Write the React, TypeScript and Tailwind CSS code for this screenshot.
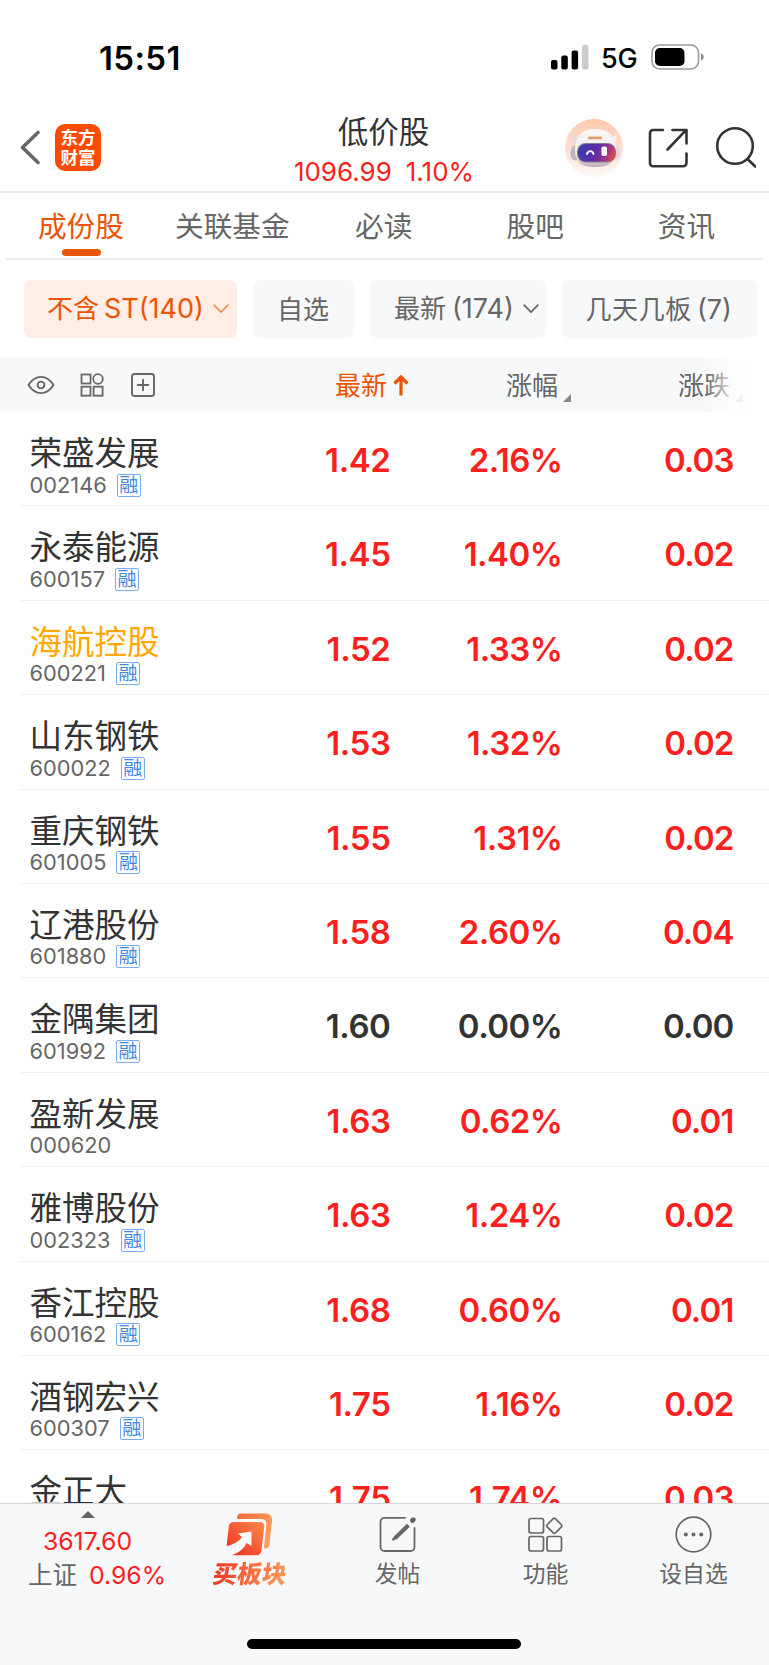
import React from "react";

type Stock = {
  name: string;
  code: string;
  margin: boolean;
  price: string;
  pct: string;
  diff: string;
  tone?: "flat" | "held";
};

const stocks: Stock[] = [
  { name: "荣盛发展", code: "002146", margin: true, price: "1.42", pct: "2.16%", diff: "0.03" },
  { name: "永泰能源", code: "600157", margin: true, price: "1.45", pct: "1.40%", diff: "0.02" },
  { name: "海航控股", code: "600221", margin: true, price: "1.52", pct: "1.33%", diff: "0.02", tone: "held" },
  { name: "山东钢铁", code: "600022", margin: true, price: "1.53", pct: "1.32%", diff: "0.02" },
  { name: "重庆钢铁", code: "601005", margin: true, price: "1.55", pct: "1.31%", diff: "0.02" },
  { name: "辽港股份", code: "601880", margin: true, price: "1.58", pct: "2.60%", diff: "0.04" },
  { name: "金隅集团", code: "601992", margin: true, price: "1.60", pct: "0.00%", diff: "0.00", tone: "flat" },
  { name: "盈新发展", code: "000620", margin: false, price: "1.63", pct: "0.62%", diff: "0.01" },
  { name: "雅博股份", code: "002323", margin: true, price: "1.63", pct: "1.24%", diff: "0.02" },
  { name: "香江控股", code: "600162", margin: true, price: "1.68", pct: "0.60%", diff: "0.01" },
  { name: "酒钢宏兴", code: "600307", margin: true, price: "1.75", pct: "1.16%", diff: "0.02" },
  { name: "金正大", code: "", margin: false, price: "1.75", pct: "1.74%", diff: "0.03" },
];

const tabs = ["成份股", "关联基金", "必读", "股吧", "资讯"];

function StatusBar() {
  return (
    <div className="flex h-[102px] items-start pt-[37px] pl-[99px]">
      <div className="w-[452px] text-[33px] leading-[42px] font-semibold tracking-[0.350px] text-black">15:51</div>
      <svg className="mt-[8px] h-[25px] w-[38px] shrink-0" viewBox="0 0 38 25">
        <rect x="0" y="15" width="6.5" height="9.5" rx="2" />
        <rect x="10.300" y="10.500" width="6.500" height="14" rx="2" />
        <rect x="20.600" y="5.500" width="6.500" height="19" rx="2" />
        <rect x="31" y="0" width="6.500" height="24.500" rx="2" fill="#cbcbcb" />
      </svg>
      <div className="ml-[12px] w-[49px] shrink-0 text-[27px] leading-[43px] font-medium tracking-[-0.300px] text-black">5G</div>
      <svg className="mt-[6px] h-[28px] w-[55px] shrink-0" viewBox="0 0 55 28">
        <rect x="2" y="2" width="46.500" height="24" rx="7.500" fill="none" stroke="#9b9b9b" strokeWidth="1.600" />
        <rect x="5" y="5" width="29.500" height="18" rx="4.800" />
        <path d="M51 10.500c1.800.6 2.700 1.800 2.700 3.500s-.9 2.900-2.700 3.500z" fill="#8c8c8c" />
      </svg>
    </div>
  );
}

function Robot() {
  return (
    <svg className="h-[60px] w-[60px]" viewBox="0 0 60 60">
      <defs>
        <linearGradient id="halo" x1="0" y1="0" x2="0" y2="1">
          <stop offset="0" stopColor="#fec8ae" />
          <stop offset="0.600" stopColor="#fee3d6" />
          <stop offset="1" stopColor="#fffaf8" />
        </linearGradient>
        <linearGradient id="shell" x1="0" y1="0" x2="0" y2="1">
          <stop offset="0" stopColor="#fbf8f6" />
          <stop offset="0.700" stopColor="#eee9e9" />
          <stop offset="1" stopColor="#b9b0b4" />
        </linearGradient>
        <linearGradient id="visor" x1="0" y1="0.300" x2="1" y2="0.500">
          <stop offset="0" stopColor="#3b3fae" />
          <stop offset="0.450" stopColor="#5b2ca6" />
          <stop offset="0.750" stopColor="#96308f" />
          <stop offset="1" stopColor="#dd4a4c" />
        </linearGradient>
      </defs>
      <circle cx="30" cy="30" r="29" fill="url(#halo)" />
      <path d="M7 14c1 5 4 6 9 4l-3 11c-4-2-7-9-6-15z" fill="#e6dad7" />
      <path d="M52 13c0 5-3 6-8 5l4 9c4-2 6-8 4-14z" fill="#f6efec" />
      <ellipse cx="11" cy="35" rx="4.500" ry="7.500" fill="#bdb6bc" />
      <ellipse cx="52" cy="34" rx="4" ry="7.500" fill="#e2d9dc" />
      <path d="M11 31C11 17 19 11 31 11s21 6 21 20c0 13-6 18-21 18S11 44 11 31z" fill="url(#shell)" />
      <rect x="13" y="25" width="39" height="19.500" rx="8.500" fill="#8a7c8e" />
      <rect x="14" y="26" width="37.500" height="17.500" rx="8" fill="url(#visor)" />
      <rect x="24" y="18.500" width="14" height="2.800" rx="1" fill="#e3a070" />
      <path d="M23 36c1-3.800 5.500-3.800 6.500 0" fill="none" stroke="#fff" strokeWidth="1.900" strokeLinecap="round" />
      <rect x="37.500" y="28.500" width="5.500" height="9.500" rx="1.800" fill="#fff" />
    </svg>
  );
}

function NavBar() {
  return (
    <div className="flex h-[91px] border-b-2 border-[#ececec]">
      <svg className="mt-[27px] ml-[19px] h-[38px] w-[24px]" viewBox="0 0 24 38" fill="none" stroke="#666" strokeWidth="3.600" strokeLinecap="round" strokeLinejoin="round">
        <path d="M19 3.500 3.500 18.500 19 33.500" />
      </svg>
      <div className="mt-[22px] ml-[12px] flex h-[47px] w-[46px] flex-col items-center rounded-[10px] bg-[#ff4a00] pt-[4px] text-[17.500px] leading-[19.500px] font-bold text-white">
        <span>东方</span>
        <span>财富</span>
      </div>
      <div className="ml-[178px] flex w-[210px] flex-col items-center">
        <div className="mt-[10px] mr-[1px] h-[40px] text-[30.500px] leading-[40px] text-[#333]">低价股</div>
        <div className="mt-[2px] flex h-[36px] gap-[14px] text-[26px] leading-[36px] text-[#fb1f20]">
          <span>1096.99</span>
          <span>1.10%</span>
        </div>
      </div>
      <div className="mt-[16px] ml-[75px]">
        <Robot />
      </div>
      <svg className="mt-[25px] ml-[23px] h-[42px] w-[42px]" viewBox="0 0 42 42" fill="none" stroke="#333" strokeWidth="2.600" strokeLinecap="round" strokeLinejoin="round">
        <path d="M16 3H6.300A3.200 3.200 0 0 0 3 6v30A3.200 3.200 0 0 0 6.300 39.300h30a3.200 3.200 0 0 0 3.200-3.200V26.500" />
        <path d="M25.500 3H39.500v13.500M39 3.200 20.500 22.500" />
      </svg>
      <svg className="mt-[24px] ml-[25px] h-[42px] w-[42px]" viewBox="0 0 42 42" fill="none" stroke="#333" strokeWidth="2.600" strokeLinecap="round">
        <circle cx="21" cy="20" r="17.800" />
        <path d="m33.500 33 7.800 7.500" />
      </svg>
    </div>
  );
}

function Tabs() {
  return (
    <div className="mx-[6px] grid h-[67px] grid-cols-5 border-b-2 border-[#ededed]">
      {tabs.map((tab, i) => (
        <div key={tab} className={i === 0 ? "flex flex-col items-center text-[#ea5504]" : "flex flex-col items-center text-[#666]"}>
          <span className="mt-[14px] mr-[1.500px] h-[40px] text-[28.700px] leading-[40px]">{tab}</span>
          {i === 0 && <span className="mt-[2px] h-[6.500px] w-[39px] rounded-full bg-[#ea5504]" />}
        </div>
      ))}
    </div>
  );
}

function Chevron() {
  return (
    <svg className="h-[10px] w-[16px]" viewBox="0 0 16 10" fill="none" stroke="currentColor" strokeWidth="1.700" strokeLinecap="round" strokeLinejoin="round">
      <path d="m1.200 1.200 6.800 7 6.800-7" />
    </svg>
  );
}

function Chips() {
  return (
    <div className="flex h-[98px] gap-[16px] pt-[20px] pl-[24px] text-[26px] leading-[60px] text-[#666]">
      <div className="flex h-[58px] w-[213px] items-center rounded-[7px] bg-[#ffede6] pl-[23px] text-[#ea5504]">
        <span>不含</span>
        <span className="ml-[5px] w-[109px] text-[27px]">ST(140)</span>
        <span className="flex opacity-60">
          <Chevron />
        </span>
      </div>
      <div className="h-[58px] w-[101px] rounded-[7px] bg-[#f7f8fa] pr-[1px] text-center">自选</div>
      <div className="flex h-[58px] w-[176px] items-center rounded-[7px] bg-[#f7f8fa] pl-[24px]">
        <span>最新</span>
        <span className="ml-[6px] w-[71px] text-[27px]">(174)</span>
        <Chevron />
      </div>
      <div className="flex h-[58px] w-[195px] rounded-[7px] bg-[#f7f8fa] pl-[23.500px]">
        <span className="tracking-[0.600px]">几天几板</span>
        <span className="ml-[5px] text-[27px]">(7)</span>
      </div>
    </div>
  );
}

function SortMark() {
  return (
    <svg className="mt-[36px] ml-[5px] h-[8px] w-[8px]" viewBox="0 0 8 8" fill="#888">
      <path d="M8 0v8H0z" />
    </svg>
  );
}

function TableHead() {
  return (
    <div className="relative flex h-[54px] bg-[#f7f8fa] text-[26px] leading-[55px] text-[#666]">
      <div className="flex w-[335px] pl-[27px]">
        <svg className="mt-[17px] h-[20px] w-[28px]" viewBox="0 0 28 20" fill="none" stroke="#666" strokeWidth="1.900" strokeLinejoin="round">
          <path d="M1.500 10C5 4.500 9 1.900 14 1.900S23 4.500 26.500 10C23 15.500 19 18.100 14 18.100S5 15.500 1.500 10z" />
          <circle cx="14" cy="10" r="3.400" />
        </svg>
        <svg className="mt-[15px] ml-[25px] h-[24px] w-[24px]" viewBox="0 0 24 24" fill="none" stroke="#666" strokeWidth="1.800">
          <rect x="1.500" y="1.500" width="9" height="9" />
          <circle cx="18" cy="6" r="4.800" />
          <rect x="1.500" y="13.700" width="9" height="9" />
          <rect x="13.600" y="13.700" width="9" height="9" />
        </svg>
        <svg className="mt-[15px] ml-[27px] h-[24px] w-[24px]" viewBox="0 0 24 24" fill="none" stroke="#666" strokeWidth="1.900" strokeLinecap="round">
          <rect x="1" y="1" width="22" height="22" rx="2.500" />
          <path d="M12 6.700v10.600M6.700 12h10.600" />
        </svg>
      </div>
      <div className="flex w-[171px] text-[#ea5504]">
        <span>最新</span>
        <svg className="mt-[16px] ml-[6px] h-[22px] w-[16px]" viewBox="0 0 16 22" fill="none" stroke="currentColor" strokeWidth="3.200" strokeLinejoin="miter">
          <path d="M8 21.500V3M1.500 9.500 8 3l6.500 6.500" />
        </svg>
      </div>
      <div className="flex w-[172px]">
        <span>涨幅</span>
        <SortMark />
      </div>
      <div className="flex">
        <span>涨跌</span>
        <SortMark />
      </div>
      <div className="absolute inset-y-0 right-0 w-[64px] bg-linear-to-r from-white/0 via-white/85 via-45% to-white" />
    </div>
  );
}

function Row({ s }: { s: Stock }) {
  const nums = s.tone === "flat" ? "text-[#333]" : "text-[#fb1f20]";
  return (
    <div className="ml-[20px] flex h-[94.400px] shrink-0 border-b border-[#eeeff0] pl-[9.500px]">
      <div className="w-[190.500px] pt-[21px]">
        <div className={s.tone === "held" ? "h-[40px] text-[32.500px] leading-[42px] text-[#ffa800]" : "h-[40px] text-[32.500px] leading-[42px] text-[#333]"}>
          {s.name}
        </div>
        {s.code && (
          <div className="flex h-[24px] items-center">
            <span className="text-[21.800px] leading-[23px] text-[#666]">{s.code}</span>
            {s.margin && (
              <span className="ml-[10px] flex h-[23px] w-[24px] items-center justify-center rounded-[2px] border border-[#78aef0] text-[19px] leading-[19px] text-[#3f87e0]">
                融
              </span>
            )}
          </div>
        )}
      </div>
      <div className={`flex text-right text-[33px] leading-[96px] font-semibold ${nums}`}>
        <span className="w-[170.500px] tracking-[-0.400px]">{s.price}</span>
        <span className="w-[172px] tracking-[-0.500px]">{s.pct}</span>
        <span className="w-[171px] tracking-[-0.900px]">{s.diff}</span>
      </div>
    </div>
  );
}

function BottomBar() {
  return (
    <div className="h-[162px] shrink-0 border-t border-[#d3d6da] bg-[#f7f8fa]">
      <div className="flex h-[135px]">
        <div className="w-[176px] text-[24.800px] text-[#fb1f20]">
          <svg className="mt-[7px] ml-[81px] h-[7px] w-[14px]" viewBox="0 0 14 7" fill="#666">
            <path d="M7 0l7 7H0z" />
          </svg>
          <div className="mt-[5px] w-[175px] text-center leading-[36px]">3617.60</div>
          <div className="flex pl-[28px] leading-[33px]">
            <span className="text-[24.500px] text-[#666]">上证</span>
            <span className="ml-[12px]">0.96%</span>
          </div>
        </div>
        <div className="flex w-[148px] flex-col items-center">
          <svg className="mt-[9px] mr-[1px] h-[43px] w-[47px]" viewBox="0 0 47 43">
            <defs>
              <linearGradient id="card" x1="0" y1="1" x2="1" y2="0">
                <stop offset="0" stopColor="#ee2a20" />
                <stop offset="1" stopColor="#ff8a4c" />
              </linearGradient>
              <linearGradient id="back" x1="0" y1="0" x2="1" y2="0.600">
                <stop offset="0" stopColor="#f9683c" />
                <stop offset="1" stopColor="#ffa060" />
              </linearGradient>
            </defs>
            <path d="M15 .6h24c5 0 7.600 3 7 8L43.600 31c-.4 3-2 4.500-4.800 4.500h-1L40.300 12c.4-4-1.400-6-5-6H11c.3-3.800 1-5.400 4-5.400z" fill="url(#back)" />
            <path d="M8 9h26c3 0 4.600 1.800 4.200 5l-2.800 24c-.3 2.700-2 4.200-4.500 4.200H6C13.500 39.500 18.500 35 20.500 30l5 3V18.500L12 20.500l4 3.500C12.500 29 7 31.500 .6 33L2.800 13.500C3.200 10.500 5 9 8 9z" fill="url(#card)" />
          </svg>
          <div className="mt-[2px] skew-x-[-8deg] bg-linear-to-r from-[#ee2e22] to-[#ff9a58] bg-clip-text px-[2px] text-[24.500px] leading-[32px] font-black text-transparent">买板块</div>
        </div>
        <div className="flex w-[148px] flex-col items-center">
          <svg className="mt-[12px] mr-[1px] h-[37px] w-[37px]" viewBox="0 0 37 37" fill="none" stroke="#666" strokeWidth="1.800" strokeLinecap="round">
            <path d="M26 1.800H5.500a4 4 0 0 0-4 4V31a4 4 0 0 0 4 4h26a4 4 0 0 0 4-4V12" />
            <path d="M16 20.500 28 8.800l1.800 1.800L18 22z" fill="#666" strokeWidth="1.500" strokeLinejoin="round" />
            <path d="M16 20.800 13.500 24l4-1.800z" fill="#666" />
            <path d="M33.500 4.500l.8-.8" strokeWidth="4.800" />
          </svg>
          <div className="mt-[4px] mr-[1px] text-[22.800px] leading-[34px] text-[#666]">发帖</div>
        </div>
        <div className="flex w-[148px] flex-col items-center">
          <svg className="mt-[12px] mr-[1px] h-[37px] w-[37px]" viewBox="0 0 37 37" fill="none" stroke="#666" strokeWidth="1.700" strokeLinejoin="round">
            <rect x="2" y="2.500" width="14.500" height="14.500" rx="2" />
            <rect x="2" y="20.500" width="14.500" height="14.500" rx="2" />
            <rect x="20" y="20.500" width="14.500" height="14.500" rx="2" />
            <rect x="21.500" y="4" width="11.600" height="11.600" rx="1.500" transform="rotate(45 27.300 9.800)" />
          </svg>
          <div className="mt-[4px] mr-[1px] text-[22.800px] leading-[34px] text-[#666]">功能</div>
        </div>
        <div className="flex w-[148px] flex-col items-center">
          <svg className="mt-[12px] mr-[1px] h-[37px] w-[37px]" viewBox="0 0 37 37">
            <circle cx="18.500" cy="18.500" r="17.300" fill="none" stroke="#666" strokeWidth="1.700" />
            <circle cx="10.800" cy="18.500" r="2" fill="#666" />
            <circle cx="18.500" cy="18.500" r="2" fill="#666" />
            <circle cx="26.200" cy="18.500" r="2" fill="#666" />
          </svg>
          <div className="mt-[4px] mr-[1px] text-[22.800px] leading-[34px] text-[#666]">设自选</div>
        </div>
      </div>
      <div className="ml-[247px] h-[10px] w-[274px] rounded-full bg-black" />
    </div>
  );
}

export default function App() {
  return (
    <div className="flex h-[1665px] w-[769px] flex-col overflow-hidden bg-white font-['Inter','Noto_Sans_CJK_SC',sans-serif] whitespace-nowrap">
      <StatusBar />
      <NavBar />
      <Tabs />
      <Chips />
      <TableHead />
      <div className="flex min-h-0 flex-1 flex-col overflow-hidden">
        {stocks.map((s) => (
          <Row key={s.name} s={s} />
        ))}
      </div>
      <BottomBar />
    </div>
  );
}
